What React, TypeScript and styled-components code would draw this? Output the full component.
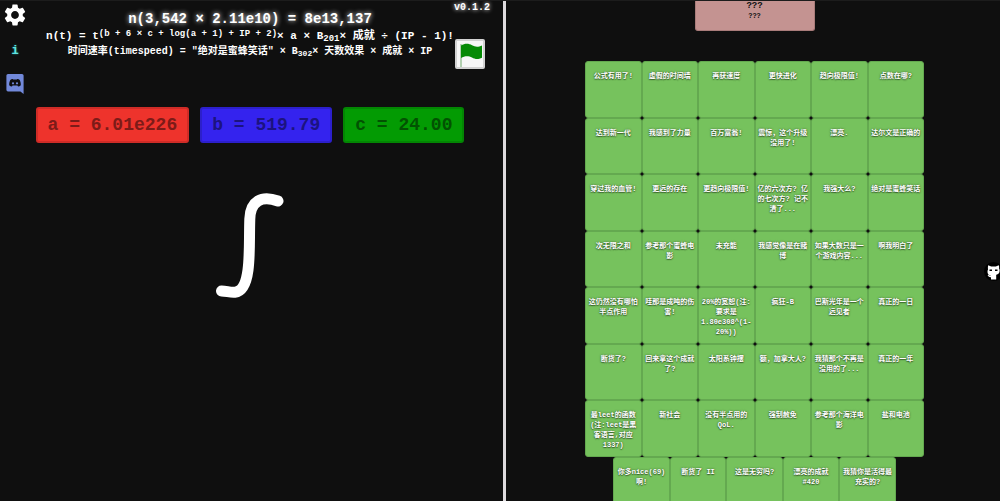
import React from "react";
import styled, { createGlobalStyle } from "styled-components";
import { MdSettings } from "react-icons/md";

const GlobalStyle = createGlobalStyle`
  * { box-sizing: border-box; }
  body {
    margin: 0;
    background: #0f0f0f;
    color: #fff;
    font-family: "Liberation Mono", "Noto Sans CJK SC", monospace;
    font-weight: 700;
  }
`;

const Page = styled.div`
  display: grid;
  grid-template-columns: 1fr 1fr;
  height: 100vh;
  overflow: hidden;
  position: relative;
  border-top: 1px solid #1c1c1c;
`;

const GamePanel = styled.main`
  position: relative;
  padding-top: 9px;
`;

const AchievementPanel = styled.section`
  border-left: 3px solid #dedbde;
  margin-left: 3px;
  padding-left: 3px;
  overflow: hidden;
  display: flex;
  flex-direction: column;
  align-items: center;
`;

const SideBar = styled.nav`
  position: absolute;
  left: 2px;
  top: 1px;
  width: 26px;
  display: flex;
  flex-direction: column;
  align-items: center;
`;

const SideButton = styled.button<{ $height: number }>`
  width: 26px;
  height: ${(p) => p.$height}px;
  padding: 0;
  border: 0;
  background: none;
  color: #fff;
  font: inherit;
  display: flex;
  align-items: center;
  justify-content: center;
  cursor: pointer;
`;

const InfoGlyph = styled.span`
  color: #5fe3e0;
  font-size: 12px;
  text-shadow: 0 0 2px #1d8f8c;
`;

const Version = styled.span`
  position: absolute;
  top: 0;
  right: 10px;
  font-size: 10px;
  line-height: 14px;
  text-shadow: 0 0 4px #fff;
`;

const FlagButton = styled.button`
  position: absolute;
  top: 38px;
  right: 15px;
  width: 30px;
  height: 30px;
  padding: 0;
  border: 2px solid #d2d2d2;
  border-radius: 2px;
  background: #f7f7f7;
  display: flex;
  cursor: pointer;
`;

const Formulas = styled.header`
  display: flex;
  flex-direction: column;
  align-items: center;
  white-space: nowrap;
`;

const Score = styled.h1`
  margin: 0;
  font-size: 14px;
  line-height: 18px;
  text-shadow: 0 0 5px #fff;
`;

const Formula = styled.p<{ $size: number }>`
  margin: 0;
  font-size: ${(p) => p.$size}px;
  line-height: ${(p) => (p.$size > 10 ? 17 : 14)}px;
  sup, sub {
    font-size: ${(p) => p.$size - 2}px;
    line-height: 0;
  }
  sup { vertical-align: 3px; }
  sub { vertical-align: -2px; }
`;

const Upgrades = styled.div`
  display: flex;
  justify-content: center;
  gap: 11px;
  margin-top: 48px;
`;

const Upgrade = styled.button<{ $bg: string; $edge: string; $ink: string }>`
  height: 36px;
  padding: 0 10px;
  border: 2px solid ${(p) => p.$edge};
  border-radius: 3px;
  background: ${(p) => p.$bg};
  color: ${(p) => p.$ink};
  font: inherit;
  font-size: 18px;
  cursor: pointer;
`;

const IntegralWrap = styled.div`
  display: flex;
  justify-content: center;
  margin-top: 50px;
`;

const LockedUpgrade = styled.button`
  flex: none;
  width: 120px;
  height: 30px;
  padding: 0 0 14px;
  border: 1px solid #a97c7a;
  border-top: 0;
  border-radius: 0 0 3px 3px;
  background: #c49391;
  color: #111;
  font: inherit;
  font-size: 9px;
  line-height: 10px;
  small { display: block; font-size: 7px; }
`;

const Achievements = styled.ul`
  list-style: none;
  margin: 30px 0 0;
  padding: 0;
  width: 339px;
  display: flex;
  flex-wrap: wrap;
  justify-content: center;
`;

const Achievement = styled.li`
  width: calc(100% / 6);
  aspect-ratio: 1;
  padding-top: 9px;
  border: 1px solid #64a950;
  border-radius: 3px;
  background: #76c25d;
  text-align: center;
  font-size: 7px;
  line-height: 10px;
  white-space: pre;
  text-shadow: 0 0 2px #2f4f25, 0 1px 1px #3f6a32;
`;

const RepoLink = styled.a`
  position: absolute;
  right: -3px;
  top: 261px;
  width: 19px;
  height: 19px;
  display: flex;
`;

const achievements = [
  "公式有用了!", "虚假的时间墙", "再获速度", "更快进化", "趋向极限值!", "点数在哪?",
  "达到新一代", "我感到了力量", "百万富翁!", "震惊，这个升级\n没用了!", "漂亮.", "达尔文是正确的",
  "穿过我的血管!", "更远的存在", "更趋向极限值!", "亿的六次方? 亿\n的七次方? 记不\n清了...", "我强大么?", "绝对是蜜蜂笑话",
  "次无限之和", "参考那个蜜蜂电\n影", "未充能", "我感觉像是在赌\n博", "如果大数只是一\n个游戏内容...", "啊我明白了",
  "这仍然没有哪怕\n半点作用", "哇那是成吨的伤\n害!", "20%的宽恕(注:\n要求是\n1.80e308^(1-\n20%))", "疯狂-B", "巴斯光年是一个\n远见者", "真正的一日",
  "断货了?", "回来拿这个成就\n了?", "太阳系钟摆", "额，加拿大人?", "我猜那个不再是\n没用的了...", "真正的一年",
  "最leet的函数\n(注:leet是黑\n客语言,对应\n1337)", "新社会", "没有半点用的\nQoL.", "强制赦免", "参考那个海洋电\n影", "盐和电池",
  "你多nice(69)\n啊!", "断货了 II", "这是无穷吗?", "漂亮的成就\n#420", "我猜你是活得最\n充实的?",
];

const upgrades = [
  { label: "a = 6.01e226", bg: "#ee332c", edge: "#cf2c27", ink: "#7d1b18" },
  { label: "b = 519.79", bg: "#3423ee", edge: "#2c1fcb", ink: "#1c1380" },
  { label: "c = 24.00", bg: "#039b03", edge: "#038603", ink: "#025202" },
];

const DiscordLogo = () => (
  <svg width="18" height="20" viewBox="0 0 18 20" aria-hidden="true">
    <path fill="#7289da" d="M2 0h14a1.600 1.600 0 0 1 1.600 1.600V20l-3.200-2.600H2A1.600 1.600 0 0 1 .4 15.800V1.600A1.600 1.600 0 0 1 2 0z" />
    <path fill="#0f0f0f" d="M6.800 5l.4.600h3.600l.4-.6c1.200.2 1.900.5 2.500.9.800 1.600 1.200 3.300 1.100 5.300-.8.800-1.700 1.200-2.700 1.300l-.7-1H6.600l-.7 1c-1-.1-1.900-.5-2.700-1.300-.1-2 .3-3.700 1.100-5.300.6-.4 1.300-.7 2.500-.9z" />
    <circle cx="7" cy="9.300" r="1.100" fill="#7289da" />
    <circle cx="11" cy="9.300" r="1.100" fill="#7289da" />
  </svg>
);

const Flag = () => (
  <svg width="26" height="26" viewBox="0 0 26 26" aria-hidden="true">
    <path d="M4 3v23" stroke="#6faa6b" strokeWidth="1" />
    <path fill="#068a06" d="M4 4.500C8 2 12 2.500 15 4.200s6 2.100 10 .2v12.400c-4 2-7 1.500-10-.2s-7-2-11 .3z" />
  </svg>
);

const Integral = () => (
  <svg width="70" height="106" viewBox="0 0 70 106" role="img" aria-label="∫">
    <path
      d="M63 8C56 5.500 48 5 43 8c-6.500 4-8 10-8.200 18-.6 18 .2 36-1.800 51-2 15-6 21.500-13 22.200-5 .4-8-1-13.500-1.200"
      fill="none"
      stroke="#fff"
      strokeWidth="11"
      strokeLinecap="round"
    />
  </svg>
);

const OctocatLogo = () => (
  <svg width="19" height="19" viewBox="0 0 19 19" aria-hidden="true">
    <circle cx="9.500" cy="9.500" r="9.500" fill="#000" />
    <path fill="#fff" d="M4.200 3.200l3 1.300h4.600l3-1.300c.5 1.500.4 2.300.2 3 .8 1.200.8 3.200.2 4.500-.6 1.200-1.700 1.700-3 2v4.800H7v-2.200c-2 .3-2.600-1-3.400-2l1-.2c.9.800 1.400 1.100 2.500.8-1.500-.4-2.700-1-3.200-2.200-.6-1.500-.5-3.200.2-4.500-.3-1-.3-2 .1-4z" />
    <path d="M5.500 8.300h2.500M11 8.300h2.500" stroke="#000" strokeWidth="1.400" />
  </svg>
);

export default function App() {
  return (
    <>
      <GlobalStyle />
      <Page lang="zh-CN">
        <GamePanel>
          <SideBar>
            <SideButton $height={26} aria-label="设置"><MdSettings size={26} /></SideButton>
            <SideButton $height={46} aria-label="信息"><InfoGlyph>i</InfoGlyph></SideButton>
            <SideButton $height={20} aria-label="Discord"><DiscordLogo /></SideButton>
          </SideBar>
          <Formulas>
            <Score>n(3,542 × 2.11e10) = 8e13,137</Score>
            <Formula $size={11}>
              n(t) = t<sup>(b + 6 × c + log(a + 1) + IP + 2)</sup>× a × B<sub>201</sub>× 成就 ÷ (IP - 1)!
            </Formula>
            <Formula $size={10}>
              时间速率(timespeed) = "绝对是蜜蜂笑话" × B<sub>302</sub>× 天数效果 × 成就 × IP
            </Formula>
          </Formulas>
          <Version>v0.1.2</Version>
          <FlagButton aria-label="旗帜"><Flag /></FlagButton>
          <Upgrades>
            {upgrades.map((u) => (
              <Upgrade key={u.label} $bg={u.bg} $edge={u.edge} $ink={u.ink}>{u.label}</Upgrade>
            ))}
          </Upgrades>
          <IntegralWrap><Integral /></IntegralWrap>
        </GamePanel>
        <AchievementPanel>
          <LockedUpgrade>???<small>???</small></LockedUpgrade>
          <Achievements>
            {achievements.map((name) => <Achievement key={name}>{name}</Achievement>)}
          </Achievements>
        </AchievementPanel>
        <RepoLink href="#" aria-label="GitHub"><OctocatLogo /></RepoLink>
      </Page>
    </>
  );
}
